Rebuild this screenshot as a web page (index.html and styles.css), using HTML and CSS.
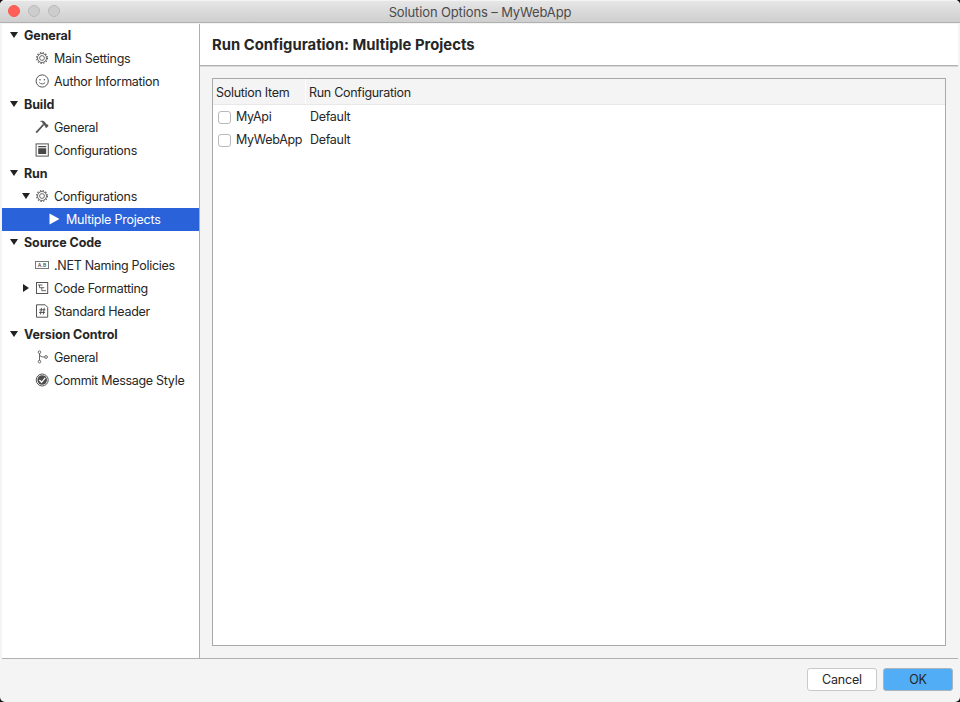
FILE: index.html
```html
<!DOCTYPE html>
<html lang="en">
<head>
<meta charset="utf-8">
<title>Solution Options – MyWebApp</title>
<link rel="stylesheet" href="styles.css">
</head>
<body>
<svg class="defs" aria-hidden="true">
  <symbol id="down" viewBox="0 0 8 6"><path d="M0 0h8L4 6z" fill="#222"/></symbol>
  <symbol id="right" viewBox="0 0 6 8"><path d="M0 0l6 4-6 4z" fill="#222"/></symbol>
  <symbol id="gear" viewBox="0 0 14 14"><g fill="none" stroke="#5c5c5c"><circle cx="7" cy="7" r="4.500" stroke-width=".9"/><circle cx="7" cy="7" r="2.400" stroke-width=".9"/><circle cx="7" cy="7" r="5.400" stroke-width="1.200" stroke-dasharray="1.4 1.427"/></g></symbol>
  <symbol id="smile" viewBox="0 0 14 14"><circle cx="7.200" cy="7" r="6.100" fill="none" stroke="#555"/><circle cx="5" cy="5.700" r=".8" fill="#555"/><circle cx="9.400" cy="5.700" r=".8" fill="#555"/><path d="M4.200 8.500c1.300 1.900 4.700 1.900 6 0" fill="none" stroke="#555" stroke-width=".9"/></symbol>
  <symbol id="hammer" viewBox="0 0 14 14"><path d="M1.200 12.600L8.600 4.500" stroke="#555" stroke-width="1.800" fill="none"/><path d="M4.700 1.200C7.500.2 9.100 1 10.200 2.400l1.600 2 1.200.2.400 1.300-1.900 2-1.100-.4-.2-1.200-2.500-2.500C7.500 2.200 6.500 1.600 4.700 1.200z" fill="#555"/></symbol>
  <symbol id="window" viewBox="0 0 14 14"><rect x="1.100" y=".9" width="12.200" height="12.200" fill="none" stroke="#555"/><path d="M3.200 3h8v1.300h-8zM3.200 5.200h8V11h-8z" fill="#484848"/></symbol>
  <symbol id="play" viewBox="0 0 10 12"><path d="M0 .5l10 5.500-10 5.500z" fill="#fff"/></symbol>
  <symbol id="format" viewBox="0 0 14 14"><rect x="1.500" y="1.500" width="11.200" height="11" fill="none" stroke="#555"/><path d="M3 4h4.500M4.500 4v2.700h4.800M6.800 6.700v3h4.200" fill="none" stroke="#555" stroke-width=".9"/></symbol>
  <symbol id="hash" viewBox="0 0 14 14"><path d="M1.500.8h8.700l2.500 2.500v9.900H1.500z" fill="none" stroke="#555"/><path d="M6.500 3.800l-1 6.600M9.300 3.800l-1 6.600M4.400 5.800h6M4 8.400h6" fill="none" stroke="#444" stroke-width=".9"/></symbol>
  <symbol id="branch" viewBox="0 0 14 14"><g fill="none" stroke="#666"><circle cx="4.500" cy="2.200" r="1.300"/><circle cx="4.500" cy="11.600" r="1.300"/><circle cx="11" cy="7" r="1.400"/><path d="M4.500 3.500v7M4.500 4c.2 2.500 2 3 5.100 3"/></g></symbol>
  <symbol id="commit" viewBox="0 0 14 14"><circle cx="7.200" cy="7" r="6" fill="none" stroke="#555"/><circle cx="7.200" cy="7" r="4.800" fill="#4c4c4c"/><path d="M4.400 7l2.200 2.300L10.200 4.800" fill="none" stroke="#fff" stroke-width="1.300"/></symbol>
</svg>
<div class="window">
  <header class="titlebar">
    <div class="lights"><i class="light close"></i><i class="light"></i><i class="light"></i></div>
    <span class="title">Solution Options – MyWebApp</span>
  </header>
  <div class="main">
    <nav class="sidebar">
      <div class="row group"><span class="arrow"><svg class="down"><use href="#down"/></svg></span>General</div>
      <div class="row item"><svg class="icon"><use href="#gear"/></svg>Main Settings</div>
      <div class="row item"><svg class="icon"><use href="#smile"/></svg>Author Information</div>
      <div class="row group"><span class="arrow"><svg class="down"><use href="#down"/></svg></span>Build</div>
      <div class="row item"><svg class="icon"><use href="#hammer"/></svg>General</div>
      <div class="row item"><svg class="icon"><use href="#window"/></svg>Configurations</div>
      <div class="row group"><span class="arrow"><svg class="down"><use href="#down"/></svg></span>Run</div>
      <div class="row nested"><span class="arrow"><svg class="down"><use href="#down"/></svg></span><svg class="icon"><use href="#gear"/></svg>Configurations</div>
      <div class="row selected"><svg class="play"><use href="#play"/></svg>Multiple Projects</div>
      <div class="row group"><span class="arrow"><svg class="down"><use href="#down"/></svg></span>Source Code</div>
      <div class="row item"><span class="icon naming">A.B</span>.NET Naming Policies</div>
      <div class="row nested"><span class="arrow"><svg class="right"><use href="#right"/></svg></span><svg class="icon"><use href="#format"/></svg>Code Formatting</div>
      <div class="row item"><svg class="icon"><use href="#hash"/></svg>Standard Header</div>
      <div class="row group"><span class="arrow"><svg class="down"><use href="#down"/></svg></span>Version Control</div>
      <div class="row item"><svg class="icon"><use href="#branch"/></svg>General</div>
      <div class="row item"><svg class="icon"><use href="#commit"/></svg>Commit Message Style</div>
    </nav>
    <section class="content">
      <h1 class="heading">Run Configuration: Multiple Projects</h1>
      <div class="table">
        <div class="thead"><span class="col">Solution Item</span><span class="col2">Run Configuration</span></div>
        <div class="trow"><span class="cell"><i class="check"></i>MyApi</span><span>Default</span></div>
        <div class="trow"><span class="cell"><i class="check"></i>MyWebApp</span><span>Default</span></div>
      </div>
    </section>
  </div>
  <footer class="footer">
    <button class="button">Cancel</button>
    <button class="button primary">OK</button>
  </footer>
</div>
</body>
</html>
```
FILE: styles.css
```css
* { box-sizing: border-box; }
body {
  margin: 0;
  background: #111;
  font: 12.5px/23px Inter, "Liberation Sans", sans-serif;
  letter-spacing: -0.29px;
  color: #262626;
}
.defs { display: none; }
.window {
  width: 960px;
  height: 702px;
  display: flex;
  flex-direction: column;
  background: #f4f4f4;
  border-radius: 5px;
  overflow: hidden;
}
.titlebar {
  height: 23px;
  flex: none;
  display: grid;
  grid-template-columns: 100px 1fr 100px;
  background: linear-gradient(#e6e6e6, #cecece);
  border-top: 1px solid #f4f4f4;
  border-bottom: 1px solid #b0b0b0;
}
.lights { display: flex; gap: 8px; padding: 4px 0 0 8px; }
.light {
  width: 12px;
  height: 12px;
  border-radius: 50%;
  background: #cdcdcd;
  border: 1px solid #b9b9b9;
}
.close { background: #ff5f57; border-color: #f35a52; }
.title { text-align: center; line-height: 22px; color: #4b4b4b; font-size: 13px; letter-spacing: -0.13px; }
.main { height: 636px; flex: none; display: flex; padding: 1px 2px 0; }
.sidebar {
  width: 198px;
  flex: none;
  background: #fff;
  border-right: 1px solid #aeaeae;
  border-bottom: 1px solid #b0b0b0;
}
.row { height: 23px; display: flex; align-items: center; white-space: nowrap; }
.group { font-weight: 700; padding-left: 7px; letter-spacing: -0.1px; }
.arrow { width: 15px; height: 23px; flex: none; display: flex; padding: 8px 0 0 1px; }
.down { width: 8px; height: 6px; }
.right { width: 6px; height: 8px; margin: -1px 0 0 1px; }
.item { padding-left: 33px; }
.nested { padding-left: 19px; }
.nested .arrow { width: 14px; }
.icon { width: 14px; height: 14px; flex: none; margin: -1px 5px 0 0; }
.naming {
  height: 8px;
  border: 1px solid #777;
  color: #555;
  font-size: 5px;
  line-height: 6px;
  text-align: center;
  font-weight: 600;
  letter-spacing: 0;
}
.selected { padding-left: 47px; background: #2962d9; color: #fff; width: 197px; letter-spacing: -0.23px; }
.play { width: 11px; height: 12px; margin: -1px 6px 0 0; }
.content {
  flex: 1;
  display: flex;
  flex-direction: column;
  padding-left: 1px;
  border-bottom: 1px solid #b0b0b0;
}
.heading {
  height: 42px;
  margin: 0 0 12px -1px;
  padding-left: 12px;
  flex: none;
  background: #fff;
  border-bottom: 1px solid #b0b0b0;
  box-shadow: 0 1px #d8d8d8;
  font-size: 14.8px;
  line-height: 42px;
  font-weight: 700;
  letter-spacing: 0.02px;
}
.table { height: 568px; margin: 0 12px 0 11px; background: #fff; border: 1px solid #a9a9a9; }
.thead {
  height: 26px;
  display: flex;
  line-height: 28px;
  background: #f4f4f4;
  border-bottom: 1px solid #e8e8e8;
}
.col { width: 93px; padding-left: 3px; border-right: 1px solid #fff; }
.col2 { padding-left: 3px; }
.trow { display: grid; grid-template-columns: 97px 1fr; height: 23px; }
.cell { display: flex; align-items: center; padding-left: 5px; }
.check { width: 13px; height: 13px; margin: 1px 5px 0 0; border: 1px solid #b9b9b9; border-radius: 3px; }
.footer { flex: 1; display: flex; justify-content: flex-end; gap: 6px; padding: 9px 7px 0 0; }
.button {
  width: 70px;
  height: 23px;
  padding: 0;
  border: 1px solid #c9c9c9;
  border-radius: 3px;
  background: #fff;
  color: #262626;
  font: inherit;
  letter-spacing: -0.18px;
  line-height: 21px;
}
.primary { background: #51adf5; border-color: #a9b4bd; }
```
